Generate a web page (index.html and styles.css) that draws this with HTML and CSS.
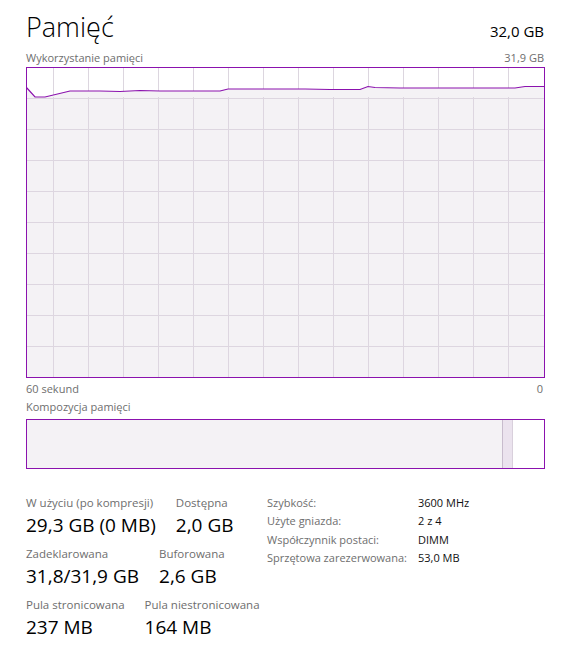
FILE: index.html
```html
<!DOCTYPE html>
<html lang="pl">
<head>
    <meta charset="UTF-8">
    <meta name="viewport" content="width=device-width, initial-scale=1.0">
    <title>Pamięć</title>
    <link rel="stylesheet" href="styles.css">
</head>
<body>
    <div class="page">
        <header class="head">
            <h1 class="title">Pamięć</h1>
            <span class="total">32,0 GB</span>
        </header>

        <div class="axis axis-top">
            <span>Wykorzystanie pamięci</span>
            <span>31,9 GB</span>
        </div>

        <svg class="graph" width="519" height="311" viewBox="0 0 519 311">
            <g class="grid">
                <line x1="27.5" y1="0" x2="27.5" y2="311"/>
                <line x1="62.5" y1="0" x2="62.5" y2="311"/>
                <line x1="97.5" y1="0" x2="97.5" y2="311"/>
                <line x1="132.5" y1="0" x2="132.5" y2="311"/>
                <line x1="167.5" y1="0" x2="167.5" y2="311"/>
                <line x1="202.5" y1="0" x2="202.5" y2="311"/>
                <line x1="237.5" y1="0" x2="237.5" y2="311"/>
                <line x1="272.5" y1="0" x2="272.5" y2="311"/>
                <line x1="307.5" y1="0" x2="307.5" y2="311"/>
                <line x1="342.5" y1="0" x2="342.5" y2="311"/>
                <line x1="377.5" y1="0" x2="377.5" y2="311"/>
                <line x1="412.5" y1="0" x2="412.5" y2="311"/>
                <line x1="447.5" y1="0" x2="447.5" y2="311"/>
                <line x1="482.5" y1="0" x2="482.5" y2="311"/>
                <line x1="0" y1="31.5" x2="519" y2="31.5"/>
                <line x1="0" y1="62.5" x2="519" y2="62.5"/>
                <line x1="0" y1="93.5" x2="519" y2="93.5"/>
                <line x1="0" y1="124.5" x2="519" y2="124.5"/>
                <line x1="0" y1="155.5" x2="519" y2="155.5"/>
                <line x1="0" y1="186.5" x2="519" y2="186.5"/>
                <line x1="0" y1="217.5" x2="519" y2="217.5"/>
                <line x1="0" y1="248.5" x2="519" y2="248.5"/>
                <line x1="0" y1="279.5" x2="519" y2="279.5"/>
            </g>
            <polygon class="area" points="0,20 9,30 19,30 44,24 74,24 94,24.5 114,23.5 134,24 194,24 202,22 279,22 304,22.5 334,22.5 342,19.5 349,20.5 374,21 489,21 499,19.5 519,19.5 519,311 0,311"/>
            <g class="grid grid-over">
                <line x1="27.5" y1="30" x2="27.5" y2="311"/>
                <line x1="62.5" y1="30" x2="62.5" y2="311"/>
                <line x1="97.5" y1="30" x2="97.5" y2="311"/>
                <line x1="132.5" y1="30" x2="132.5" y2="311"/>
                <line x1="167.5" y1="30" x2="167.5" y2="311"/>
                <line x1="202.5" y1="30" x2="202.5" y2="311"/>
                <line x1="237.5" y1="30" x2="237.5" y2="311"/>
                <line x1="272.5" y1="30" x2="272.5" y2="311"/>
                <line x1="307.5" y1="30" x2="307.5" y2="311"/>
                <line x1="342.5" y1="30" x2="342.5" y2="311"/>
                <line x1="377.5" y1="30" x2="377.5" y2="311"/>
                <line x1="412.5" y1="30" x2="412.5" y2="311"/>
                <line x1="447.5" y1="30" x2="447.5" y2="311"/>
                <line x1="482.5" y1="30" x2="482.5" y2="311"/>
                <line x1="0" y1="31.5" x2="519" y2="31.5"/>
                <line x1="0" y1="62.5" x2="519" y2="62.5"/>
                <line x1="0" y1="93.5" x2="519" y2="93.5"/>
                <line x1="0" y1="124.5" x2="519" y2="124.5"/>
                <line x1="0" y1="155.5" x2="519" y2="155.5"/>
                <line x1="0" y1="186.5" x2="519" y2="186.5"/>
                <line x1="0" y1="217.5" x2="519" y2="217.5"/>
                <line x1="0" y1="248.5" x2="519" y2="248.5"/>
                <line x1="0" y1="279.5" x2="519" y2="279.5"/>
            </g>
            <polyline class="usage" points="0,20 9,30 19,30 44,24 74,24 94,24.5 114,23.5 134,24 194,24 202,22 279,22 304,22.5 334,22.5 342,19.5 349,20.5 374,21 489,21 499,19.5 519,19.5"/>
            <rect class="frame" x="0.5" y="0.5" width="518" height="310"/>
        </svg>

        <div class="axis axis-bottom">
            <span>60 sekund</span>
            <span>0</span>
        </div>

        <div class="caption">Kompozycja pamięci</div>
        <div class="composition">
            <div class="seg seg-used" style="width: 475px"></div>
            <div class="seg seg-modified" style="width: 11px"></div>
            <div class="seg seg-free"></div>
        </div>

        <div class="details">
            <div class="stats">
                <div class="stat-row">
                    <div class="stat">
                        <div class="stat-label">W użyciu (po kompresji)</div>
                        <div class="stat-value">29,3 GB (0 MB)</div>
                    </div>
                    <div class="stat">
                        <div class="stat-label">Dostępna</div>
                        <div class="stat-value">2,0 GB</div>
                    </div>
                </div>
                <div class="stat-row">
                    <div class="stat">
                        <div class="stat-label">Zadeklarowana</div>
                        <div class="stat-value">31,8/31,9 GB</div>
                    </div>
                    <div class="stat">
                        <div class="stat-label">Buforowana</div>
                        <div class="stat-value">2,6 GB</div>
                    </div>
                </div>
                <div class="stat-row">
                    <div class="stat">
                        <div class="stat-label">Pula stronicowana</div>
                        <div class="stat-value">237 MB</div>
                    </div>
                    <div class="stat">
                        <div class="stat-label">Pula niestronicowana</div>
                        <div class="stat-value">164 MB</div>
                    </div>
                </div>
            </div>

            <dl class="specs">
                <dt>Szybkość:</dt>
                <dd>3600 MHz</dd>
                <dt>Użyte gniazda:</dt>
                <dd>2 z 4</dd>
                <dt>Współczynnik postaci:</dt>
                <dd>DIMM</dd>
                <dt>Sprzętowa zarezerwowana:</dt>
                <dd>53,0 MB</dd>
            </dl>
        </div>
    </div>
</body>
</html>
```

FILE: styles.css
```css
body {
    margin: 0;
    padding: 0;
    background-color: #fff;
    font-family: "Open Sans", "Noto Sans", sans-serif;
    color: #000;
}
.page {
    width: 519px;
    padding-left: 26px;
}
.head {
    display: flex;
    justify-content: space-between;
    align-items: baseline;
    padding-top: 13px;
    height: 28px;
}
.title {
    margin: 0;
    font-size: 27px;
    font-weight: 300;
    line-height: 28px;
}
.total {
    font-size: 15px;
    padding-right: 1px;
}
.axis {
    display: flex;
    justify-content: space-between;
    font-size: 11px;
    line-height: 14px;
    color: #6e6e6e;
    padding-right: 1px;
}
.axis-top {
    margin-top: 10px;
    margin-bottom: 2px;
}
.axis-bottom {
    margin-top: 4px;
    padding-right: 2px;
}
.graph {
    display: block;
}
.grid line {
    stroke: #dcd6df;
    stroke-width: 1;
}
.grid-over line {
    stroke: #ddd6e0;
}
.area {
    fill: #f4f2f5;
}
.usage {
    fill: none;
    stroke: #8b12ae;
    stroke-width: 1.2;
}
.frame {
    fill: none;
    stroke: #8b12ae;
    stroke-width: 1;
}
.caption {
    margin-top: 4px;
    font-size: 11px;
    line-height: 14px;
    color: #6e6e6e;
}
.composition {
    display: flex;
    margin-top: 5px;
    height: 48px;
    border: 1px solid #8b12ae;
}
.seg-used {
    background-color: #f4f2f5;
}
.seg-modified {
    box-sizing: border-box;
    background-color: #ebe3ee;
    border-left: 1px solid #c8bccd;
    border-right: 1px solid #d9d0dc;
}
.seg-free {
    flex: 1;
    background-color: #fff;
}
.details {
    display: flex;
    align-items: flex-start;
    padding-top: 25px;
}
.stats {
    width: 241px;
    padding-top: 2px;
}
.stat-row {
    display: flex;
    gap: 20px;
    margin-bottom: 10px;
}
.stat-label {
    font-size: 11.5px;
    line-height: 14px;
    color: #6e6e6e;
    white-space: nowrap;
}
.stat-value {
    margin-top: 3px;
    font-size: 19px;
    line-height: 24px;
    white-space: nowrap;
}
.specs {
    display: grid;
    grid-template-columns: 151px auto;
    align-content: start;
    margin: 0;
    font-size: 11px;
    line-height: 18.3px;
}
.specs dt {
    color: #6e6e6e;
    white-space: nowrap;
}
.specs dd {
    margin: 0;
    color: #111;
}
```
